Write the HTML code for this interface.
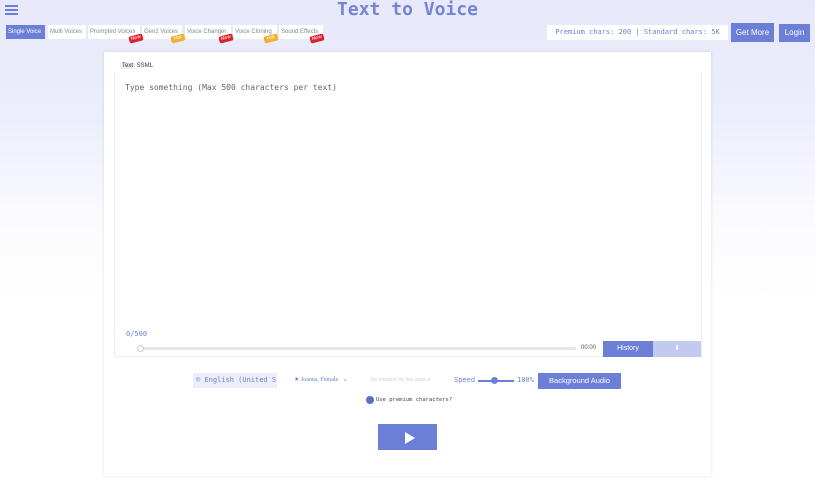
<!DOCTYPE html>
<html><head><style>
*{margin:0;padding:0;box-sizing:border-box}
body{width:815px;height:480px;overflow:hidden;font-family:"Liberation Sans",sans-serif;background:linear-gradient(#e7e9fb 0px,#eceefb 120px,#fbfbfe 220px,#fff 300px);position:relative}
.a{position:absolute;white-space:nowrap}
.mono{font-family:"DejaVu Sans Mono","Liberation Mono",monospace}
.tab{position:absolute;top:25px;height:14px;font-size:6px;color:#888;background:#fff;line-height:14px;padding:0 2px;white-space:nowrap;overflow:hidden}
.badge{position:absolute;top:35px;width:14px;height:7px;font-size:5px;color:#fff;border-radius:2px;transform:rotate(-15deg);text-align:center;line-height:7px}
.btn{position:absolute;background:#6b7fd7;color:#fff;font-size:8px;text-align:center;white-space:nowrap}
</style></head><body>
<div class="a" style="left:5px;top:5px;width:13px;height:2px;background:#6b7fd7;box-shadow:0 4px #6b7fd7,0 8px #6b7fd7"></div>
<div class="a mono" style="left:0;width:815px;top:0;text-align:center;font-size:18px;font-weight:bold;color:#7583d0;line-height:20px">Text to Voice</div>
<div class="tab" style="left:6px;width:39px;background:#6b7fd7;color:#fff">Single Voice</div>
<div class="tab" style="left:48px;width:38px">Multi Voices</div>
<div class="tab" style="left:88px;width:52px">Prompted Voices</div>
<div class="tab" style="left:142px;width:40px">Gen2 Voices</div>
<div class="tab" style="left:185px;width:46px">Voice Changer</div>
<div class="tab" style="left:233px;width:44px">Voice Cloning</div>
<div class="tab" style="left:279px;width:44px">Sound Effects</div>
<div class="badge" style="left:129px;background:#d9222a">New</div>
<div class="badge" style="left:171px;background:#f0b030">Hot</div>
<div class="badge" style="left:219px;background:#d9222a">New</div>
<div class="badge" style="left:264px;background:#f0b030">Hot</div>
<div class="badge" style="left:310px;background:#d9222a">New</div>
<div class="a mono" style="left:547px;top:25px;width:181px;height:15px;background:#fff;font-size:7px;color:#6b7fd7;line-height:15px;text-align:center">Premium chars: 200 | Standard chars: 5K</div>
<div class="btn" style="left:731px;top:23px;width:43px;height:19px;line-height:19px">Get More</div>
<div class="btn" style="left:779px;top:24px;width:31px;height:18px;line-height:18px">Login</div>
<div class="a" style="left:104px;top:52px;width:607px;height:424px;background:#fff;box-shadow:0 0 3px rgba(0,0,0,.12)"></div>
<div class="a" style="left:120px;top:62px;font-size:6px;color:#333;line-height:8px"><span style="background:#eee;padding:0 2px">Text</span> SSML</div>
<div class="a" style="left:114px;top:72px;width:588px;height:285px;border:1px solid #eee;border-top:none"></div>
<div class="a mono" style="left:125px;top:83px;font-size:8px;color:#666">Type something (Max 500 characters per text)</div>
<div class="a mono" style="left:126px;top:330px;font-size:7px;color:#6b7fd7">0/500</div>
<div class="a" style="left:140px;top:347px;width:436px;height:3px;background:#e6e6e6;border-radius:2px"></div>
<div class="a" style="left:137px;top:345px;width:7px;height:7px;border:1px solid #ccc;border-radius:50%;background:#fff"></div>
<div class="a" style="left:581px;top:345px;font-size:6px;color:#555">00:00</div>
<div class="btn" style="left:603px;top:341px;width:50px;height:16px;line-height:16px;font-size:7px">History</div>
<div class="btn" style="left:653px;top:341px;width:48px;height:16px;line-height:16px;font-size:7px;background:#c3caf0">⬇</div>
<div class="a mono" style="left:193px;top:373px;width:84px;height:15px;background:#eceef8;font-size:7px;color:#6b7fd7;line-height:15px;padding-left:3px;overflow:hidden">© English (United S▾</div>
<div class="a" style="left:294px;top:376px;font-size:6px;color:#6b7fd7;font-family:'Liberation Serif',serif">★ Joanna, Female &nbsp;&nbsp;⌄</div>
<div class="a" style="left:371px;top:377px;font-size:5px;color:#ccd">No emotion for this voice ▾</div>
<div class="a mono" style="left:454px;top:376px;font-size:7px;color:#6b7fd7">Speed</div>
<div class="a" style="left:478px;top:380px;width:36px;height:2px;background:#6b7fd7"></div>
<div class="a" style="left:491px;top:377px;width:7px;height:7px;border-radius:50%;background:#6b7fd7"></div>
<div class="a mono" style="left:517px;top:376px;font-size:7px;color:#6b7fd7">100%</div>
<div class="btn" style="left:538px;top:373px;width:83px;height:16px;line-height:16px;font-size:7.5px">Background Audio</div>
<div class="a" style="left:366px;top:396px;width:8px;height:8px;border-radius:50%;background:#5a6fcc"></div>
<div class="a mono" style="left:376px;top:397px;font-size:5.5px;color:#444">Use premium characters?</div>
<div class="btn" style="left:378px;top:424px;width:59px;height:26px"><div style="width:0;height:0;margin:8px auto 0;border-left:10px solid #fff;border-top:6px solid transparent;border-bottom:6px solid transparent;position:relative;left:2px"></div></div>
</body></html>
